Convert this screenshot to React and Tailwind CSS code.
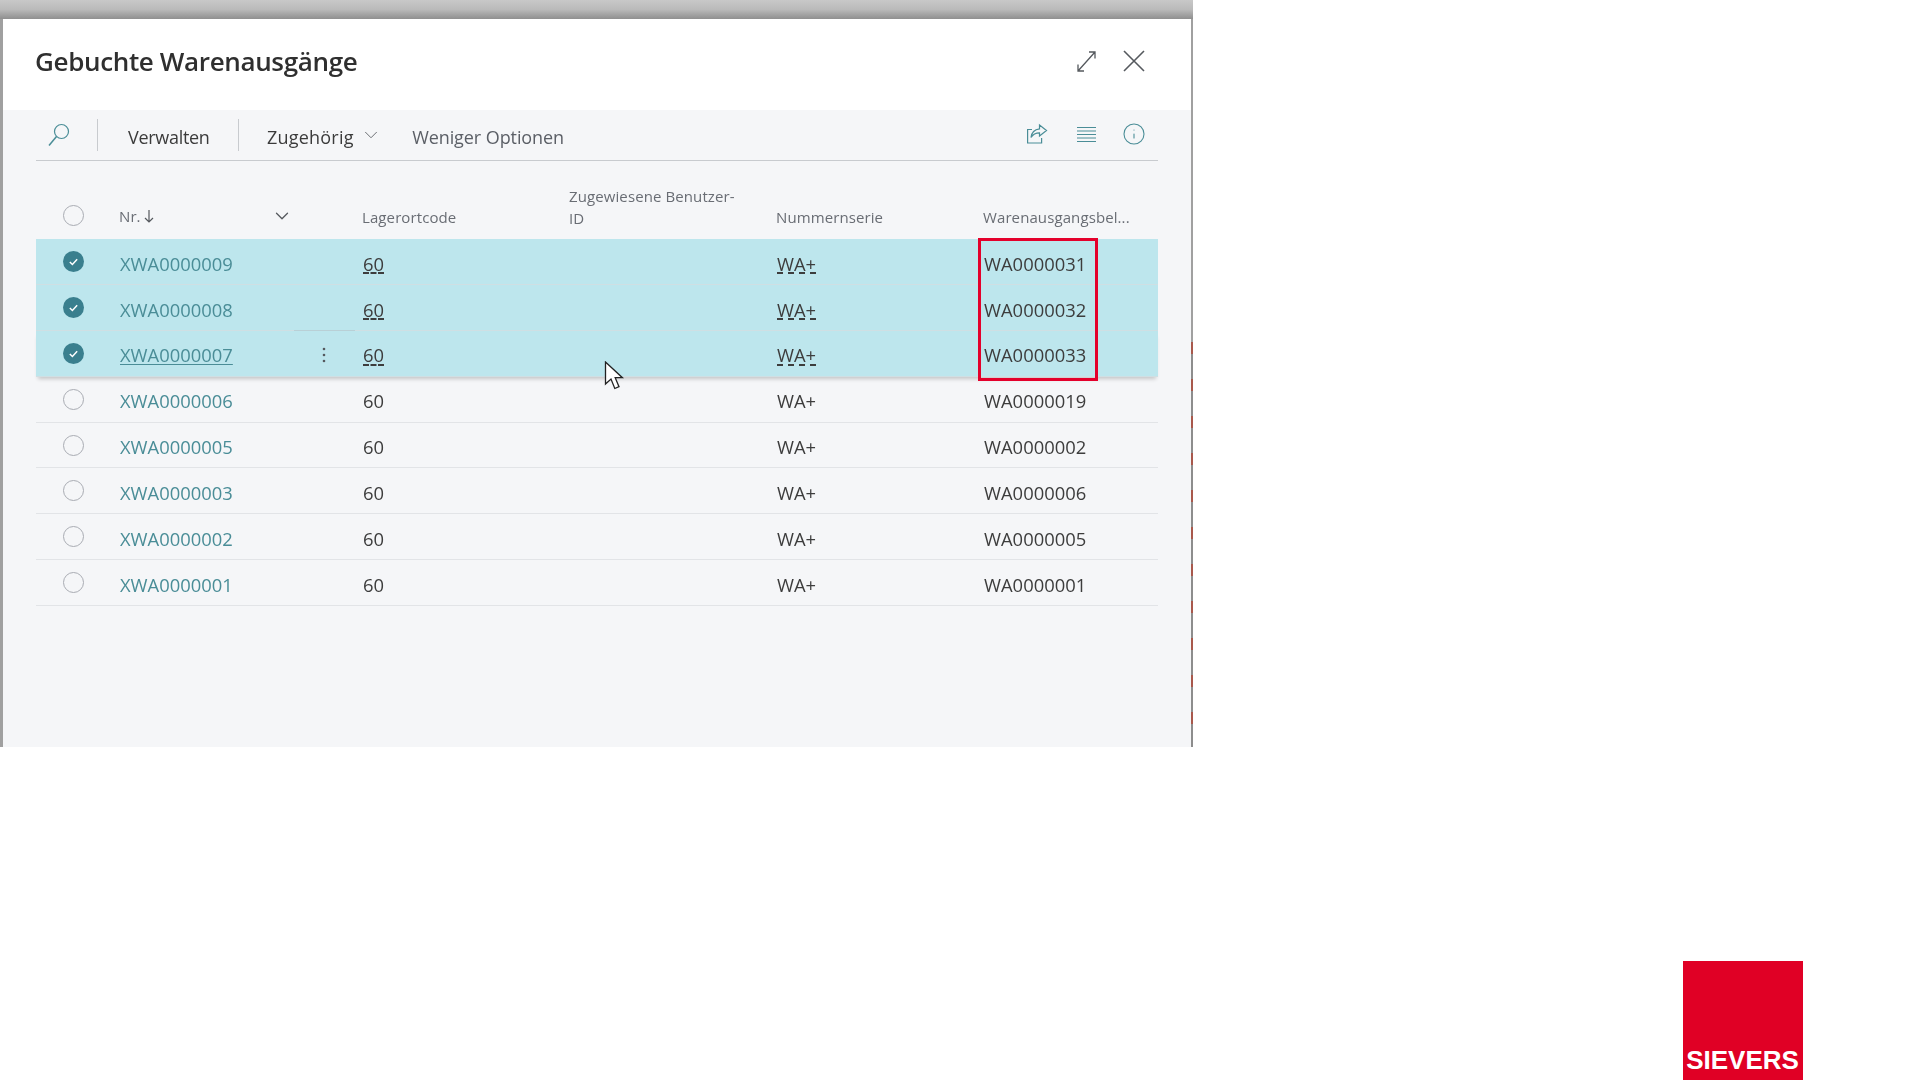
import React from "react";
import { ChevronDown, Info } from "lucide-react";

const rows = [
  { nr: "XWA0000009", lager: "60", serie: "WA+", beleg: "WA0000031", selected: true },
  { nr: "XWA0000008", lager: "60", serie: "WA+", beleg: "WA0000032", selected: true },
  { nr: "XWA0000007", lager: "60", serie: "WA+", beleg: "WA0000033", selected: true, active: true },
  { nr: "XWA0000006", lager: "60", serie: "WA+", beleg: "WA0000019" },
  { nr: "XWA0000005", lager: "60", serie: "WA+", beleg: "WA0000002" },
  { nr: "XWA0000003", lager: "60", serie: "WA+", beleg: "WA0000006" },
  { nr: "XWA0000002", lager: "60", serie: "WA+", beleg: "WA0000005" },
  { nr: "XWA0000001", lager: "60", serie: "WA+", beleg: "WA0000001" },
];

const gridCols = "grid grid-cols-[84px_174px_61px_207px_207px_207px_182px]";

function RowCheck({ checked }) {
  if (checked) {
    return (
      <span className="ml-[27px] mb-[4px] flex h-[21px] w-[21px] items-center justify-center rounded-full bg-[#3a7f8e]">
        <svg width="11" height="11" viewBox="0 0 12 12" fill="none" stroke="#ffffff" strokeWidth="1.6">
          <path d="M2 6.5l2.8 2.8L10 3.5" />
        </svg>
      </span>
    );
  }
  return <span className="ml-[27px] mb-[4px] block h-[21px] w-[21px] rounded-full border-[1.5px] border-[#a9acb3]" />;
}

function SearchIcon() {
  return (
    <svg width="22" height="24" viewBox="0 0 22 24" fill="none" stroke="#4a8d97" strokeWidth="1.2" className="ml-[12px]">
      <circle cx="13.5" cy="8.5" r="7" />
      <path d="M8.5 13.5L1 22.5" strokeWidth="1.5" />
    </svg>
  );
}

function ShareIcon() {
  return (
    <svg width="22" height="22" viewBox="0 0 22 22" fill="none" stroke="#4a8d97" strokeWidth="1.2">
      <path d="M6 6.5H1.6V20h14v-5" />
      <path d="M13.5 2l7 5.5-7 5.5V9.8c-4 0-6.5 1.4-8.5 4.7 .6-4.8 3.4-8 8.5-8.6z" />
    </svg>
  );
}

function ListIcon() {
  return (
    <svg width="19" height="18" viewBox="0 0 19 18" fill="none" stroke="#4a8d97" strokeWidth="1.1">
      <path d="M0 2.5h19M0 6h19M0 9.5h19M0 13h19M0 16.5h19" />
    </svg>
  );
}

function ExpandIcon() {
  return (
    <svg width="19" height="21" viewBox="0 0 19 21" fill="none" stroke="#55595e" strokeWidth="1.3">
      <path d="M1 20L18 1M12 1h6v6.5M1 13.5V20h6" />
    </svg>
  );
}

function CloseIcon() {
  return (
    <svg width="22" height="22" viewBox="0 0 22 22" fill="none" stroke="#55595e" strokeWidth="1.6">
      <path d="M1 1l20 20M21 1L1 21" />
    </svg>
  );
}

function Cursor() {
  return (
    <svg width="21" height="30" viewBox="0 0 21 30" className="absolute left-[568px] top-[122px]">
      <path d="M1.5 1v22l5.5-5 3.8 9.5 4.2-1.8-3.8-9h7.2z" fill="#ffffff" stroke="#222222" strokeWidth="1.3" />
    </svg>
  );
}

function App() {
  return (
    <div className="flex h-[1080px] w-[1920px] flex-col bg-white font-['Open_Sans','Noto_Sans',sans-serif]">
      <div className="relative flex h-[747px] w-[1193px] flex-col bg-[#a0a0a0]">
        <div className="h-[19px] shrink-0 bg-gradient-to-b from-[#c8c8c8] via-[#bababa] to-[#8f8f8f]" />
        {/* red dashes of the window behind, on the right edge */}
        <div className="absolute bottom-0 right-0 h-[405px] w-[2px] bg-[repeating-linear-gradient(180deg,#a8584c_0px,#a8584c_12px,#8d8d8d_12px,#8d8d8d_37px)]" />
        <div className="ml-[2.5px] mr-[2px] flex flex-1 flex-col blur-[0.6px]">
          <div className="flex h-[91px] shrink-0 items-center justify-between bg-white pb-[7px] pl-[32.5px] pr-[46px]">
            <h1 className="text-[26px] font-semibold tracking-[-0.35px] text-[#2f2f2f]">Gebuchte Warenausgänge</h1>
            <div className="flex items-center gap-[27px]">
              <ExpandIcon />
              <CloseIcon />
            </div>
          </div>

          <div className="flex flex-1 flex-col bg-[#f5f6f8] px-[33.5px]">
            <div className="flex h-[51px] shrink-0 items-center border-b-[1.5px] border-[#c8cbcf]">
              <SearchIcon />
              <span className="ml-[27px] h-[32px] w-px bg-[#c8cbcf]" />
              <span className="ml-[30px] pt-[4px] text-[18px] tracking-[-0.3px] text-[#3b3b3b]">Verwalten</span>
              <span className="ml-[28px] h-[32px] w-px bg-[#c8cbcf]" />
              <span className="ml-[28.5px] pt-[4px] text-[18px] tracking-[0.2px] text-[#3b3b3b]">Zugehörig</span>
              <ChevronDown size={22} strokeWidth={1} className="ml-[6.5px] text-[#5f6368]" />
              <span className="ml-[30px] pt-[4px] text-[18px] tracking-[-0.08px] text-[#5b5f66]">Weniger Optionen</span>
              <div className="ml-auto mr-[12px] flex items-center pb-[3px]">
                <ShareIcon />
                <span className="ml-[29px]">
                  <ListIcon />
                </span>
                <Info size={24} strokeWidth={1.1} className="ml-[26px] text-[#4a8d97]" />
              </div>
            </div>

            <div className={`${gridCols} h-[78px] shrink-0 items-end text-[15px] tracking-[0.1px] text-[#696d74]`}>
              <span className="mb-[13px] ml-[27px] block h-[21px] w-[21px] rounded-full border-[1.5px] border-[#a9acb3]" />
              <span className="-ml-px flex items-center pb-[12px] pr-[1px]">
                Nr.
                <svg width="10" height="14" viewBox="0 0 10 14" fill="none" stroke="#55595e" strokeWidth="1.2" className="ml-[3px]">
                  <path d="M5 1v12M1 9l4 4 4-4" />
                </svg>
                <ChevronDown size={22} strokeWidth={1.4} className="ml-auto text-[#55595e]" />
              </span>
              <span />
              <span className="pb-[11px] pl-[7px]">Lagerortcode</span>
              <span className="pb-[10px] pl-[7px] leading-[22px]">
                Zugewiesene Benutzer-
                <br />
                ID
              </span>
              <span className="pb-[11px] pl-[7px]">Nummernserie</span>
              <span className="pb-[11px] pl-[7px]">Warenausgangsbel...</span>
            </div>

            <div className="relative">
              {rows.map((row) => (
                <div
                  key={row.nr}
                  className={`${gridCols} relative h-[45.9px] items-center border-b-[1.5px] pt-[4px] text-[18.4px] text-[#3d3d3d] ${
                    row.selected ? "border-[#cfdfe3] bg-[#bde6ed]" : "border-[#e2e4e7]"
                  } ${row.active ? "shadow-[0_4px_4px_-2px_rgba(0,0,0,0.2)]" : ""}`}
                >
                  <RowCheck checked={row.selected} />
                  <span className={`text-[#4a8d97] ${row.active ? "underline underline-offset-2" : ""}`}>{row.nr}</span>
                  <span className="flex justify-center pr-[2px]">
                    {row.active && (
                      <svg width="4" height="16" viewBox="0 0 4 16" fill="#55595e">
                        <circle cx="2" cy="2" r="1.3" />
                        <circle cx="2" cy="8" r="1.3" />
                        <circle cx="2" cy="14" r="1.3" />
                      </svg>
                    )}
                  </span>
                  <span className="pl-[8px]">
                    <span className={row.selected ? "underline decoration-dashed underline-offset-2" : ""}>{row.lager}</span>
                  </span>
                  <span />
                  <span className="pl-[8px]">
                    <span className={row.selected ? "underline decoration-dashed underline-offset-2" : ""}>{row.serie}</span>
                  </span>
                  <span className="pl-[8px]">{row.beleg}</span>
                </div>
              ))}
              {/* divider above the hovered row's menu button */}
              <div className="absolute left-[258px] top-[91px] h-px w-[61px] bg-[#b9d0d6]" />
              <div className="absolute left-[942px] top-[-1px] h-[143px] w-[120px] border-[3px] border-[#e4002b]" />
              <Cursor />
            </div>
          </div>
        </div>
      </div>

      <div className="flex flex-1 items-end justify-end pr-[117.5px]">
        <div className="flex h-[119px] w-[120px] items-end justify-center bg-[#e00025] pb-[6px]">
          <span className="font-['Liberation_Sans',sans-serif] text-[26px] font-bold leading-[28px] text-white">SIEVERS</span>
        </div>
      </div>
    </div>
  );
}

export default App;
